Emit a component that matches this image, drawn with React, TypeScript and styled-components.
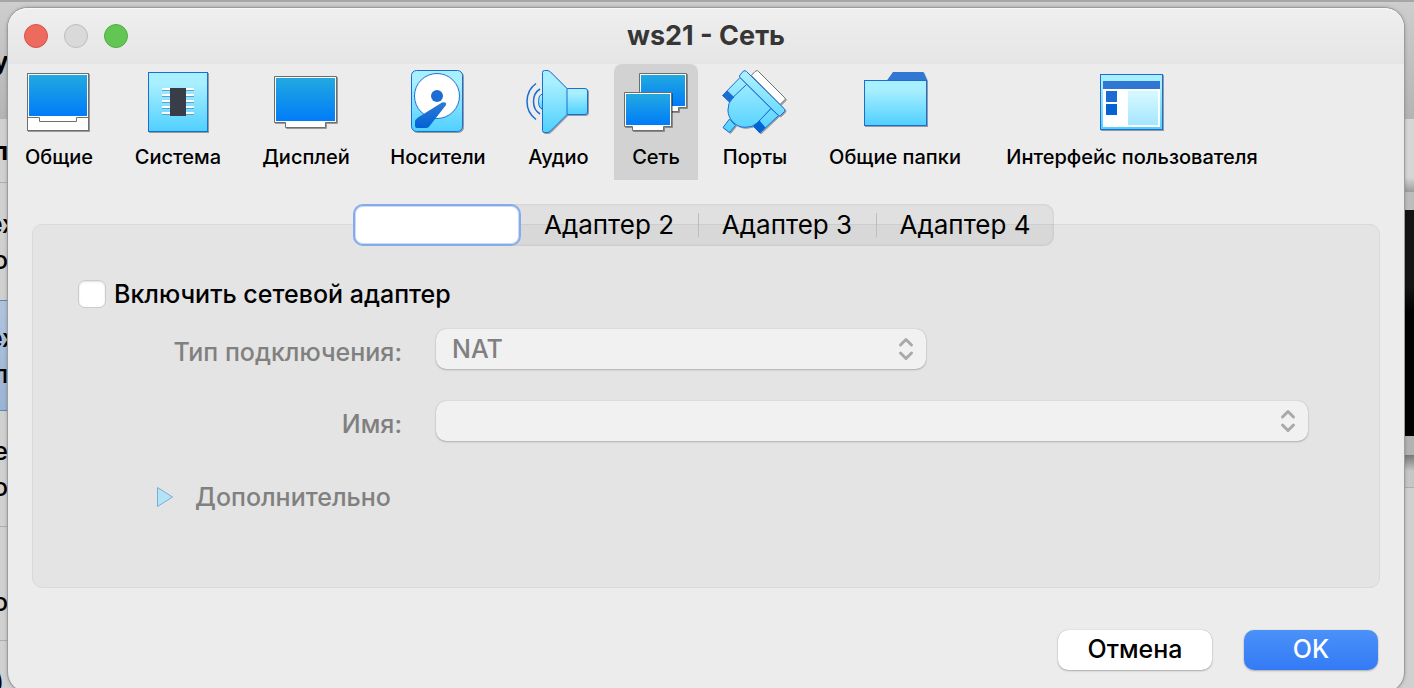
import React from "react";
import styled, { createGlobalStyle, css } from "styled-components";

const GlobalStyle = createGlobalStyle`
  *, *::before, *::after { box-sizing: border-box; }
  html, body { margin: 0; height: 100%; overflow: hidden; }
  body { font-family: Inter, "Liberation Sans", sans-serif; color: #000; background: #cfcfcf; }
  button, select, input { font: inherit; }
`;

/* ---------- windows behind the dialog ---------- */

const Desktop = styled.div`
  position: relative;
  min-height: 100vh;
  padding: 8px 10px 0 8px;
`;

const Backdrop = styled.div`
  position: absolute;
  inset: 0;
  display: flex;
  justify-content: space-between;
  overflow: hidden;
  background: linear-gradient(#cecece, #b4b4b4 117px, #d0d0d0 117px);
  border-top: 2px solid #a6a6a6;
`;

const Strip = styled.div`
  display: flex;
  flex-direction: column;
  width: 30px;
`;

const ListRow = styled.div<{ $height: number; $selected?: boolean; $plain?: boolean }>`
  flex: none;
  display: flex;
  flex-direction: column;
  justify-content: center;
  width: 24px;
  height: ${(p) => p.$height}px;
  overflow: hidden;
  border-bottom: ${(p) => (p.$plain ? "none" : "1px solid #adadad")};
  ${(p) =>
    p.$selected &&
    css`
      background: linear-gradient(#b0c4de, #9ab4d6);
      border-top: 1px solid #6084b4;
      border-bottom-color: #6084b4;
    `}
`;

const ListText = styled.span<{ $bold?: boolean; $inset?: number }>`
  display: flex;
  justify-content: flex-end;
  padding-right: ${(p) => p.$inset ?? 16}px;
  font-size: 25px;
  line-height: 36px;
  font-weight: ${(p) => (p.$bold ? 700 : 500)};
`;

const Band = styled.div<{ $height: number; $fill: string }>`
  flex: none;
  height: ${(p) => p.$height}px;
  background: ${(p) => p.$fill};
`;

/* ---------- dialog window ---------- */

const Dialog = styled.main`
  position: relative;
  display: flex;
  flex-direction: column;
  padding-bottom: 22px;
  background: #ececec;
  border-radius: 20px;
  box-shadow: 0 0 0 1px #9c9c9c, 0 0 4px rgba(0, 0, 0, 0.35);
`;

const TitleBar = styled.header`
  display: grid;
  grid-template-columns: 1fr auto 1fr;
  align-items: center;
  height: 56px;
  padding: 0 16px;
  border-radius: 20px 20px 0 0;
  background: linear-gradient(#efefef, #e5e5e5);
  box-shadow: inset 0 1px 0 #f8f8f8;
`;

const Lights = styled.div`
  display: flex;
  gap: 16px;
`;

const Light = styled.button<{ $fill: string; $edge: string }>`
  width: 24px;
  height: 24px;
  padding: 0;
  border-radius: 50%;
  border: 1px solid ${(p) => p.$edge};
  background: ${(p) => p.$fill};
`;

const Title = styled.h1`
  margin: 0;
  font-size: 27px;
  line-height: 32px;
  font-weight: 700;
  color: #363636;
`;

const Toolbar = styled.nav`
  display: flex;
  gap: 5px;
`;

const ToolButton = styled.button<{ $width: number; $active?: boolean }>`
  display: flex;
  flex-direction: column;
  align-items: center;
  gap: 11px;
  flex: none;
  width: ${(p) => p.$width}px;
  height: 116px;
  margin: ${(p) => (p.$active ? "0 2px" : "0")};
  padding: 6px 0 0;
  border: 0;
  border-radius: 8px 8px 0 0;
  background: ${(p) => (p.$active ? "#d2d2d2" : "transparent")};
  font-size: 20px;
  line-height: 24px;
  font-weight: 500;
  color: #000;
  white-space: nowrap;
`;

const Icon = styled.svg`
  flex: none;
  width: 66px;
  height: 64px;
  overflow: visible;
`;

const Content = styled.section`
  display: flex;
  flex-direction: column;
  align-items: center;
  padding: 24px 24px 0;
`;

const TabList = styled.div`
  position: relative;
  display: flex;
  height: 42px;
  margin: 0 6px -22px 0;
  border-radius: 10px;
  background: rgba(0, 0, 0, 0.05);
  box-shadow: inset 0 0 3px rgba(0, 0, 0, 0.12);
`;

const Tab = styled.button<{ $active?: boolean }>`
  display: flex;
  align-items: center;
  justify-content: center;
  width: ${(p) => (p.$active ? 168 : 177)}px;
  padding: 0;
  border: 0;
  border-radius: 10px;
  background: none;
  font-size: 26px;
  line-height: 32px;
  color: #000;
  ${(p) =>
    p.$active &&
    css`
      background: #fff;
      border: 2px solid #86abe6;
      box-shadow: inset 0 0 0 1px #c4dbfa;
    `}
`;

const TabDivider = styled.span`
  align-self: center;
  width: 1px;
  height: 24px;
  background: #bdbdbd;
`;

const Group = styled.div`
  align-self: stretch;
  height: 364px;
  padding: 55px 71px 0 45px;
  border: 1px solid #d9d9d9;
  border-radius: 10px;
  background: #e4e4e4;
`;

const EnableRow = styled.label`
  display: flex;
  align-items: center;
  gap: 8px;
  height: 28px;
  font-size: 25px;
  line-height: 28px;
  font-weight: 500;
`;

const CheckBox = styled.input`
  appearance: none;
  width: 28px;
  height: 28px;
  margin: 0;
  border: 1px solid #cbcbcb;
  border-radius: 7px;
  background: #fff;
  box-shadow: inset 0 1px 2px rgba(0, 0, 0, 0.12);
`;

const Fields = styled.div`
  display: grid;
  grid-template-columns: 324px 1fr;
  column-gap: 34px;
  row-gap: 30px;
  margin-top: 20px;
`;

const FieldLabel = styled.label`
  align-self: center;
  padding-top: 6px;
  text-align: right;
  font-size: 25px;
  line-height: 32px;
  font-weight: 500;
  color: #808080;
`;

const SelectBox = styled.div<{ $width?: string }>`
  position: relative;
  width: ${(p) => p.$width ?? "100%"};
  height: 42px;
  padding: 1px 0;
`;

const Select = styled.select`
  display: block;
  appearance: none;
  width: 100%;
  height: 40px;
  padding: 0 16px;
  border: 0;
  border-radius: 10px;
  background: #f1f1f1;
  box-shadow: 0 0 1px rgba(0, 0, 0, 0.25), 0 1px 2px rgba(0, 0, 0, 0.22);
  font-size: 25px;
  line-height: 32px;
  font-weight: 500;
  color: #808080;
  opacity: 1;
`;

const Arrows = styled.svg`
  position: absolute;
  top: 9px;
  right: 12px;
  width: 16px;
  height: 24px;
  pointer-events: none;
`;

const Disclosure = styled.button`
  display: flex;
  align-items: center;
  gap: 21px;
  margin: 39px 0 0 78px;
  padding: 0;
  border: 0;
  background: none;
  font-size: 25px;
  line-height: 32px;
  font-weight: 500;
  color: #808080;
`;

const Actions = styled.footer`
  display: flex;
  justify-content: flex-end;
  gap: 32px;
  padding: 42px 26px 0;
`;

const ActionButton = styled.button<{ $primary?: boolean }>`
  width: ${(p) => (p.$primary ? 134 : 154)}px;
  height: 40px;
  padding: 0 0 2px;
  border: 0;
  border-radius: 10px;
  font-size: 25px;
  line-height: 32px;
  font-weight: 500;
  color: ${(p) => (p.$primary ? "#fff" : "#000")};
  background: ${(p) => (p.$primary ? "linear-gradient(#4a91f8, #347af6)" : "#fff")};
  box-shadow: 0 0 1px rgba(0, 0, 0, 0.3), 0 1px 2px rgba(0, 0, 0, 0.25);
`;

/* ---------- icons ---------- */

const GradientDefs = styled.svg`
  position: absolute;
  width: 0;
  height: 0;
`;

const Gradients = () => (
  <GradientDefs aria-hidden="true">
    <defs>
      <linearGradient id="screen" x1="0" y1="0" x2="0" y2="1">
        <stop offset="0" stopColor="#22a9e0" />
        <stop offset="1" stopColor="#007cf9" />
      </linearGradient>
      <linearGradient id="sky" x1="0" y1="0" x2="0" y2="1">
        <stop offset="0.2" stopColor="#a8efff" />
        <stop offset="1" stopColor="#4fd0ff" />
      </linearGradient>
      <linearGradient id="skyPort" gradientUnits="userSpaceOnUse" x1="0" y1="0" x2="0" y2="64">
        <stop offset="0.1" stopColor="#a8efff" />
        <stop offset="1" stopColor="#4fd0ff" />
      </linearGradient>
      <linearGradient id="edge" x1="0" y1="0" x2="0" y2="1">
        <stop offset="0" stopColor="#3079d3" />
        <stop offset="1" stopColor="#0062d6" />
      </linearGradient>
      <linearGradient id="pale" x1="0" y1="0" x2="0" y2="1">
        <stop offset="0.1" stopColor="#d3f7ff" />
        <stop offset="1" stopColor="#a5e6ff" />
      </linearGradient>
      <filter id="drop" x="-10%" y="-10%" width="120%" height="120%">
        <feDropShadow dx="1" dy="1" stdDeviation="0.4" floodColor="#000" floodOpacity="0.35" />
      </filter>
    </defs>
  </GradientDefs>
);

const GeneralIcon = () => (
  <Icon viewBox="0 0 66 64" aria-hidden="true">
    <g filter="url(#drop)" fill="#fff" stroke="#6e6e6e">
      <rect x="1.5" y="3.5" width="61" height="57" />
      <path d="M1.5 47.5H13.5V51.5H50.5V47.5H62.5" />
    </g>
    <rect x="3" y="5" width="58" height="41" fill="url(#screen)" />
  </Icon>
);

const SystemIcon = () => (
  <Icon viewBox="0 0 66 64" aria-hidden="true">
    <rect x="3.5" y="2.5" width="59" height="59" fill="url(#sky)" stroke="#1a6cd3" filter="url(#drop)" />
    {[18, 24, 30, 36, 42].map((y) => (
      <g key={y}>
        <rect x="17" y={y} width="32" height="2" fill="#fff" />
        <rect x="17" y={y + 2} width="32" height="1" fill="#5f9fd0" />
      </g>
    ))}
    <rect x="25" y="18" width="16" height="28" fill="#393d47" />
  </Icon>
);

const DisplayIcon = () => (
  <Icon viewBox="0 0 66 64" aria-hidden="true">
    <path
      d="M1.5 6.5H63.5V52.5H52.5V57.5H12.5V52.5H1.5Z"
      fill="#fff"
      stroke="#6e6e6e"
      filter="url(#drop)"
    />
    <rect x="3" y="8" width="59" height="43" fill="url(#screen)" />
  </Icon>
);

const StorageIcon = () => (
  <Icon viewBox="0 0 66 64" aria-hidden="true">
    <rect x="6.5" y="0.5" width="51" height="61" rx="5" fill="url(#sky)" stroke="#1a6cd3" filter="url(#drop)" />
    <circle cx="32" cy="26" r="22.5" fill="#fff" stroke="#2371d4" />
    <circle cx="32" cy="26" r="6" fill="#1d6cd4" />
    <path
      d="M37 32.5L13 47.5Q10 49.5 10 52V56Q10 58 12 58H21Q23.5 58 25 55.5L41 35Q42 31.5 37 32.5Z"
      fill="url(#edge)"
    />
  </Icon>
);

const AudioIcon = () => (
  <Icon viewBox="1 0 66 64" aria-hidden="true">
    <path
      d="M11 13.500Q2 20 2 31.500T11 49.500M15 19Q8.500 23 8.500 31.500T15 44"
      fill="none"
      stroke="#1a6cd3"
      strokeWidth="1.5"
    />
    <g fill="url(#sky)" stroke="#1a6cd3" filter="url(#drop)" strokeLinejoin="round">
      <path d="M17.5 24.5H16Q13.5 26 13.5 31.5T16 38.5H17.5Z" />
      <path d="M41.5 18.5H60Q62.5 18.5 62.5 21V42Q62.5 44.5 60 44.5H41.5Z" />
      <path d="M19.5 0.5H22Q24 0.5 25.5 2L42 18.5V44.5L25.5 61Q24 62.5 22 62.5H19.5Q17.5 62.5 17.5 60.5V2.5Q17.5 0.5 19.5 0.5Z" />
    </g>
  </Icon>
);

const NetworkIcon = () => (
  <Icon viewBox="0 0 66 64" aria-hidden="true">
    <path d="M16.5 3.5H63.5V37.5H55.5V41.5H24.5V37.5H16.5Z" fill="#fff" stroke="#6e6e6e" filter="url(#drop)" />
    <rect x="18" y="5" width="44" height="31" fill="url(#screen)" />
    <path d="M1.5 22.5H48.5V56.5H40.5V60.5H9.5V56.5H1.5Z" fill="#fff" stroke="#6e6e6e" filter="url(#drop)" />
    <rect x="3" y="24" width="44" height="31" fill="url(#screen)" />
  </Icon>
);

const PortsIcon = () => (
  <Icon viewBox="0 0 66 64" aria-hidden="true">
    <g filter="url(#drop)" strokeLinejoin="round">
      <path
        d="M34.7 0.7Q35.5 0.5 36.5 1.5L62.5 27.5Q63.5 28.5 63 29.5L58 34.5L29.3 5.5L33 1.5Z"
        fill="#fff"
        stroke="#6e6e6e"
      />
      <g fill="url(#skyPort)" stroke="#1a6cd3">
        <path d="M7.5 49L13.5 55.5L7.5 62.5L1 57.5Z" />
        <path d="M18 7.5L0.5 25.5L7.5 32L25 14.5Z" />
        <path d="M49 38.5L56.5 45.5L38 63L31.5 56.5Z" />
        <path d="M24.7 14.3L10.5 27.8A17.7 17.7 0 0 0 35.5 52.8L49 38.3Z" />
        <path d="M21.5 1Q23 0 24.5 1.5L62.5 39Q63.5 40 62.5 41.5L58.5 45.5Q57.5 46.5 56 45L18 7.5Q16.8 6 18 5Z" />
      </g>
      <path d="M5.3 20.5L12.3 27.3L7.5 32L0.5 25.5Z" fill="#1f6dd3" />
      <path d="M37.3 50.3L43.5 57.5L37.5 63L31.5 56.5Z" fill="#0063d6" />
    </g>
  </Icon>
);

const FoldersIcon = () => (
  <Icon viewBox="0 0 66 64" aria-hidden="true">
    <g filter="url(#drop)">
      <path d="M24.5 11L31 2H61.5L65 10V12H24.5Z" fill="#3078d2" />
      <rect x="2.5" y="10.5" width="62" height="45" fill="url(#sky)" stroke="#1a6cd3" />
    </g>
  </Icon>
);

const InterfaceIcon = () => (
  <Icon viewBox="0 0 66 64" aria-hidden="true">
    <rect x="1.5" y="4.5" width="62" height="55" fill="url(#sky)" stroke="#1a6cd3" filter="url(#drop)" />
    <rect x="4" y="19" width="57" height="38" fill="#fff" />
    <rect x="4" y="11" width="57" height="8" fill="#2f77d2" />
    <rect x="7" y="21" width="11" height="11" fill="#1d6cd4" />
    <rect x="7" y="34" width="11" height="11" fill="#0562d3" />
    <rect x="29" y="21" width="30" height="34" fill="url(#pale)" />
  </Icon>
);

const UpDown = () => (
  <Arrows
    viewBox="0 0 16 24"
    fill="none"
    stroke="#a9a9a9"
    strokeWidth="3"
    strokeLinecap="round"
    strokeLinejoin="round"
    aria-hidden="true"
  >
    <path d="M2.5 8L8 2.5L13.5 8M2.5 16L8 21.5L13.5 16" />
  </Arrows>
);

/* ---------- data ---------- */

const sections = [
  { label: "Общие", width: 102, icon: GeneralIcon },
  { label: "Система", width: 126, icon: SystemIcon },
  { label: "Дисплей", width: 120, icon: DisplayIcon },
  { label: "Носители", width: 134, icon: StorageIcon },
  { label: "Аудио", width: 97, icon: AudioIcon },
  { label: "Сеть", width: 84, icon: NetworkIcon, active: true },
  { label: "Порты", width: 100, icon: PortsIcon },
  { label: "Общие папки", width: 170, icon: FoldersIcon },
  { label: "Интерфейс пользователя", width: 294, icon: InterfaceIcon },
];

export default function App() {
  return (
    <Desktop>
      <GlobalStyle />
      <Gradients />
      <Backdrop aria-hidden="true">
        <Strip>
          <ListRow $height={117} $plain>
            <ListText $bold $inset={0}>
              ун
            </ListText>
          </ListRow>
          <ListRow $height={64}>
            <ListText $bold>п</ListText>
          </ListRow>
          <ListRow $height={117} $plain>
            <ListText $inset={8}>ех</ListText>
            <ListText>о</ListText>
          </ListRow>
          <ListRow $height={111} $selected>
            <ListText $inset={8}>ех</ListText>
            <ListText>л</ListText>
          </ListRow>
          <ListRow $height={116}>
            <ListText>е</ListText>
            <ListText>о</ListText>
          </ListRow>
          <ListRow $height={114}>
            <ListText>&nbsp;</ListText>
            <ListText>о</ListText>
          </ListRow>
          <ListRow $height={80} $plain>
            <ListText $inset={20}>)</ListText>
          </ListRow>
        </Strip>
        <Strip>
          <Band $height={117} $fill="transparent" />
          <Band $height={73} $fill="linear-gradient(#d6d6d6 80%, #9c9c9c)" />
          <Band $height={18} $fill="#bcbcbc" />
          <Band $height={226} $fill="linear-gradient(#141414 34%, #000 46%)" />
          <Band $height={19} $fill="#b2b2b2" />
          <Band $height={32} $fill="linear-gradient(#787878, #c6c6c6 50%)" />
          <Band $height={1} $fill="#adadad" />
        </Strip>
      </Backdrop>

      <Dialog>
        <TitleBar>
          <Lights>
            <Light aria-label="Закрыть" $fill="#ec6a5e" $edge="#d5544a" />
            <Light aria-label="Свернуть" $fill="#d9d9d9" $edge="#bdbdbd" disabled />
            <Light aria-label="Развернуть" $fill="#62c554" $edge="#52ae43" />
          </Lights>
          <Title>ws21 - Сеть</Title>
        </TitleBar>

        <Toolbar>
          {sections.map(({ label, width, icon: Glyph, active }) => (
            <ToolButton key={label} $width={width} $active={active}>
              <Glyph />
              {label}
            </ToolButton>
          ))}
        </Toolbar>

        <Content>
          <TabList role="tablist">
            <Tab role="tab" aria-selected="true" aria-label="Адаптер 1" $active />
            <Tab role="tab">Адаптер 2</Tab>
            <TabDivider />
            <Tab role="tab">Адаптер 3</Tab>
            <TabDivider />
            <Tab role="tab">Адаптер 4</Tab>
          </TabList>
          <Group>
            <EnableRow>
              <CheckBox type="checkbox" />
              Включить сетевой адаптер
            </EnableRow>
            <Fields>
              <FieldLabel htmlFor="attachment">Тип подключения:</FieldLabel>
              <SelectBox $width="490px">
                <Select id="attachment" disabled defaultValue="NAT">
                  <option>NAT</option>
                </Select>
                <UpDown />
              </SelectBox>
              <FieldLabel htmlFor="name">Имя:</FieldLabel>
              <SelectBox>
                <Select id="name" disabled />
                <UpDown />
              </SelectBox>
            </Fields>
            <Disclosure disabled>
              <svg width="18" height="22" viewBox="0 0 18 22" aria-hidden="true">
                <path d="M1.5 1.5V20.5L16.5 11Z" fill="#b3e4f4" stroke="#7fa9dd" strokeLinejoin="round" />
              </svg>
              Дополнительно
            </Disclosure>
          </Group>
        </Content>

        <Actions>
          <ActionButton>Отмена</ActionButton>
          <ActionButton $primary>OK</ActionButton>
        </Actions>
      </Dialog>
    </Desktop>
  );
}
